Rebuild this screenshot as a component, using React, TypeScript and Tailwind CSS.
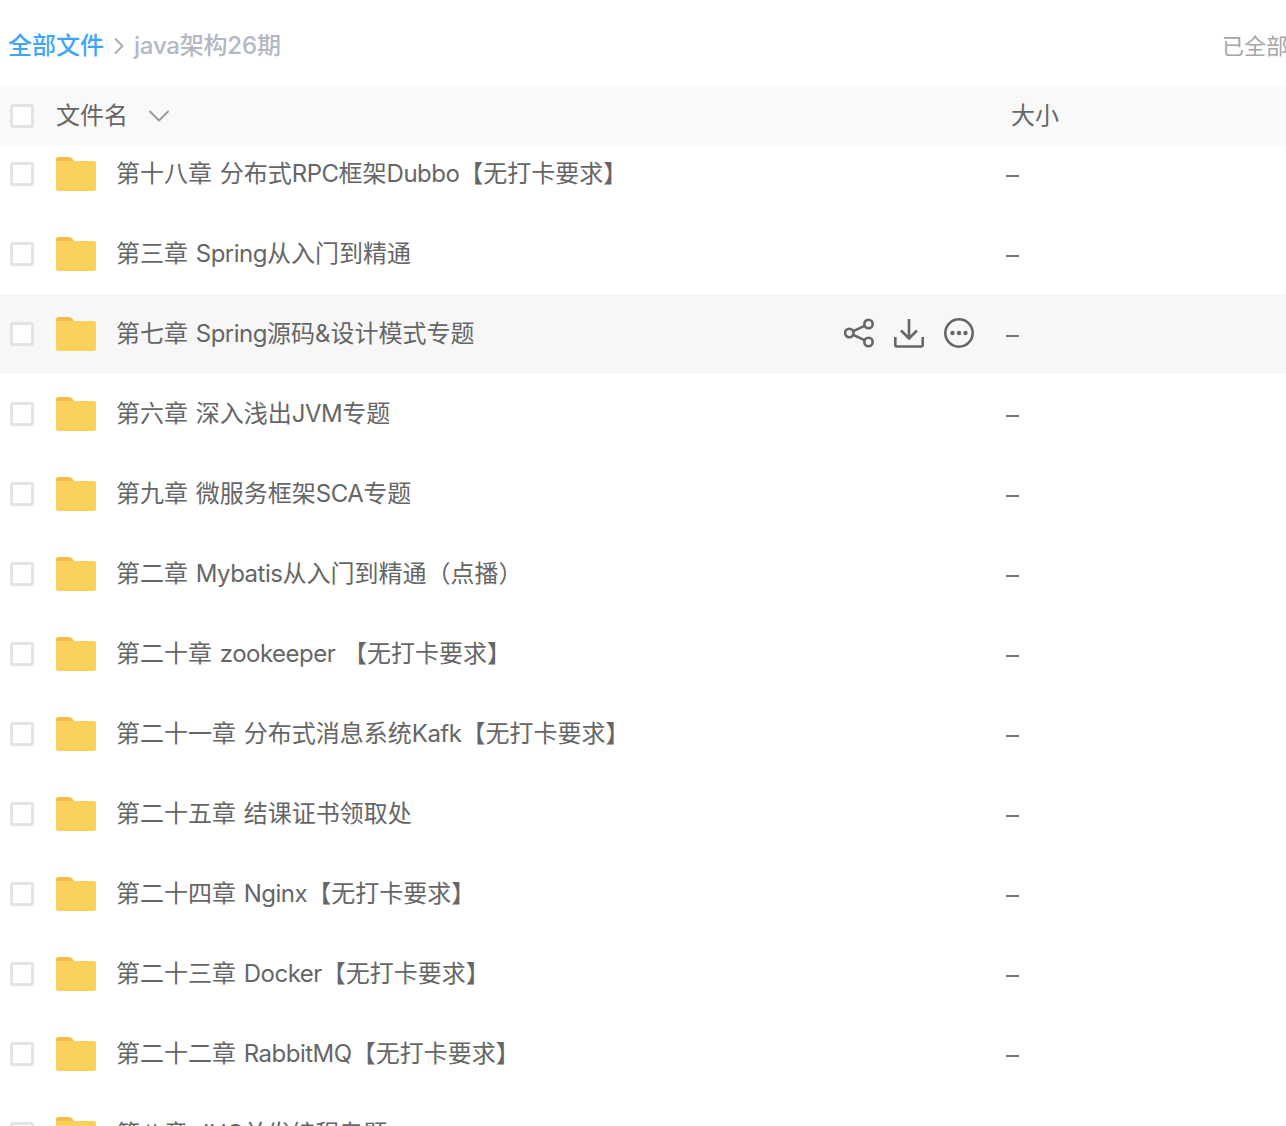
import { ChevronDown, ChevronRight } from "lucide-react";

const rows = [
  "第十八章 分布式RPC框架Dubbo【无打卡要求】",
  "第三章 Spring从入门到精通",
  "第七章 Spring源码&设计模式专题",
  "第六章 深入浅出JVM专题",
  "第九章 微服务框架SCA专题",
  "第二章 Mybatis从入门到精通（点播）",
  "第二十章 zookeeper 【无打卡要求】",
  "第二十一章 分布式消息系统Kafk【无打卡要求】",
  "第二十五章 结课证书领取处",
  "第二十四章 Nginx【无打卡要求】",
  "第二十三章 Docker【无打卡要求】",
  "第二十二章 RabbitMQ【无打卡要求】",
  "第八章 JUC并发编程专题",
];

const Checkbox = () => (
  <div className="w-6 h-6 rounded-[3px] border-[3px] border-[#e3e3e3] bg-white shrink-0" />
);

const FolderIcon = () => (
  <svg width="40" height="34" viewBox="0 0 40 34" className="shrink-0">
    <path d="M0 2.500A2.500 2.500 0 0 1 2.500 0h10c2.500 0 3.500 1 5.500 4h18v6H0z" fill="#f2bd4a" />
    <path d="M0 4h38a2 2 0 0 1 2 2v26a2 2 0 0 1-2 2H2a2 2 0 0 1-2-2z" fill="#fad15c" />
  </svg>
);

const RowActions = () => (
  <div className="flex items-center gap-5 text-[#666666]">
    <svg width="30" height="30" viewBox="0 0 30 30" fill="none" stroke="currentColor" strokeWidth="2.600">
      <circle cx="5.300" cy="15" r="4.200" />
      <circle cx="24.500" cy="6" r="4.200" />
      <circle cx="24.500" cy="24" r="4.200" />
      <path d="M9.200 13.200 20.600 7.800M9.200 16.800l11.400 5.400" />
    </svg>
    <svg width="30" height="30" viewBox="0 0 30 30" fill="none" stroke="currentColor" strokeWidth="2.600">
      <path d="M15 1v19M7 12.500l8 8 8-8" />
      <path d="M1.300 19v8a1.500 1.500 0 0 0 1.500 1.500h24.400a1.500 1.500 0 0 0 1.500-1.500v-8" />
    </svg>
    <svg width="30" height="30" viewBox="0 0 30 30" fill="none" stroke="currentColor" strokeWidth="2.600">
      <circle cx="15" cy="15" r="13.700" />
      <circle cx="8.500" cy="15" r="2.200" fill="currentColor" stroke="none" />
      <circle cx="15" cy="15" r="2.200" fill="currentColor" stroke="none" />
      <circle cx="21.500" cy="15" r="2.200" fill="currentColor" stroke="none" />
    </svg>
  </div>
);

// latin runs sit a little tighter than the CJK around them
const RowName = ({ name }: { name: string }) => (
  <span className="ml-5 text-2xl text-[#666666] whitespace-pre [word-spacing:1px]">
    {name.split(/([A-Za-z]+)/).map((part, i) =>
      i % 2 === 1 ? (
        <span key={i} className="tracking-[-0.5px]">{part}</span>
      ) : (
        part
      )
    )}
  </span>
);

const App = () => {
  return (
    <div
      className="w-[1286px] h-[1126px] overflow-hidden bg-white"
      style={{ fontFamily: '"Inter", "Noto Sans CJK SC", sans-serif' }}
    >
      <div className="h-[86px] flex items-center justify-between pl-2 pt-[6px]">
        <div className="flex items-center text-2xl font-medium">
          <span className="text-[#3fa5fb]">全部文件</span>
          <ChevronRight size={28} strokeWidth={1.700} className="text-[#a9abb2] mx-px" />
          <span className="text-[#b4b7c4] tracking-[-0.2px]">java架构26期</span>
        </div>
        <span className="text-[22px] text-[#a6a6a6] w-[64px] overflow-hidden whitespace-nowrap">已全部加载</span>
      </div>

      <div className="relative z-10 h-[60px] bg-[#f9f9f9] flex items-center pl-[10px]">
        <Checkbox />
        <span className="ml-[22px] text-2xl text-[#666666]">文件名</span>
        <ChevronDown size={36} strokeWidth={1.300} className="ml-[13px] text-[#9a9a9a]" />
        <span className="absolute left-[1011px] text-2xl text-[#666666]">大小</span>
      </div>

      <div className="-mt-3">
        {rows.map((name, i) => (
          <div key={i} className={`relative h-20 flex items-center pl-[10px] ${i === 2 ? "bg-[#f7f7f7]" : ""}`}>
            <Checkbox />
            <div className="ml-[22px]">
              <FolderIcon />
            </div>
            <RowName name={name} />
            {i === 2 && (
              <div className="absolute left-[844px] top-[24px]">
                <RowActions />
              </div>
            )}
            <span className="absolute left-[1006px] top-[41px] w-[13px] h-[2px] bg-[#777777]" />
          </div>
        ))}
      </div>
    </div>
  );
};

export default App;
